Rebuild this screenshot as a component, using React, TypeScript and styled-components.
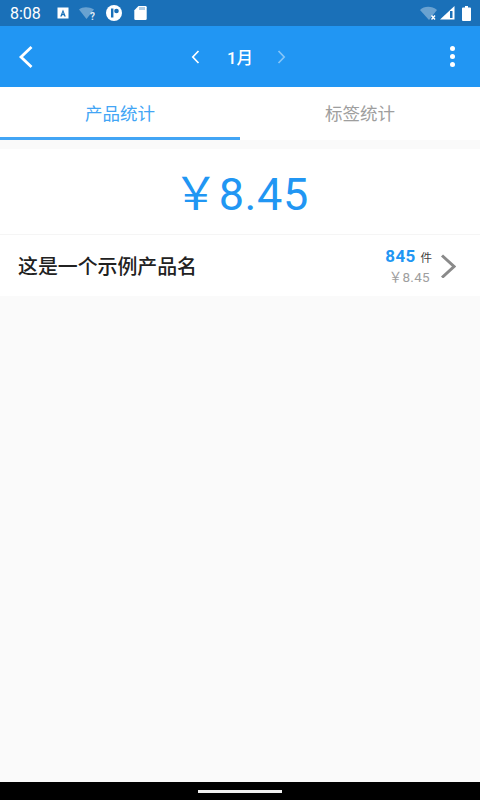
import React from "react";
import styled, { createGlobalStyle } from "styled-components";

const GlobalStyle = createGlobalStyle`
  html, body {
    margin: 0;
    padding: 0;
    height: 100%;
    background: #fafafa;
  }
  #root {
    height: 100%;
  }
`;

const YEN = "\uFFE5";

const App: React.FC = () => {
  return (
    <Page>
      <GlobalStyle />
      <StatusBar>
        <Clock>8:08</Clock>
        <StatusLeft>
          <svg width="12" height="12" viewBox="0 0 12 12">
            <path fillRule="evenodd" fill="#fff" d="M0.500 0.500h11v11h-11z M6 2.500L3.200 9.500h1.500l.5-1.300h1.600l.5 1.300h1.500z M6 5l.5 1.800H5.500z" />
          </svg>
          <svg width="17" height="14" viewBox="0 0 17 14" overflow="visible">
            <path fill="#fff" opacity="0.35" d="M0 3.500C3.500.5 10 .5 15 3.500L7.500 13z" />
            <text x="11" y="14" fontSize="10" fontWeight="700" fontFamily="Roboto, sans-serif" fill="#fff" opacity="0.85">?</text>
          </svg>
          <svg width="16" height="16" viewBox="0 0 16 16">
            <circle cx="8" cy="8" r="8" fill="#fff" />
            <path fill="#1a70b8" d="M5 3.500h2.400v9H5z" />
            <circle cx="10.500" cy="6" r="2.300" fill="#1a70b8" />
          </svg>
          <SdIcon width="13" height="14" viewBox="0 0 13 14">
            <path fill="#fff" d="M4.500 0H11.500A1.200 1.200 0 0 1 12.700 1.200V12.800A1.200 1.200 0 0 1 11.500 14H1.500A1.200 1.200 0 0 1 .3 12.800V4.200z" />
            <path stroke="#1a70b8" strokeWidth="0.700" d="M6 1v3M8 1v3M10 1v3" />
          </SdIcon>
        </StatusLeft>
        <StatusRight>
          <svg width="18" height="15" viewBox="0 0 18 15">
            <path fill="#fff" opacity="0.35" d="M0 4C4-.2 12-.2 17 4L9 14z" />
            <path stroke="#fff" strokeWidth="1.400" d="M11.500 9.500l3.500 4M15 9.500l-3.500 4" />
          </svg>
          <svg width="15" height="14" viewBox="0 0 15 14">
            <path fill="#fff" d="M0 13.500L14.500 0v13.500z" />
            <path fill="#1a70b8" d="M10 5h2.500v7h-2.500z" />
          </svg>
          <BatteryIcon width="9" height="15" viewBox="0 0 9 15">
            <path fill="#fff" d="M3 0h3v1.500h2a1 1 0 0 1 1 1V14a1 1 0 0 1-1 1H1a1 1 0 0 1-1-1V2.500a1 1 0 0 1 1-1h2z" />
          </BatteryIcon>
        </StatusRight>
      </StatusBar>

      <AppBar>
        <BackButton>
          <svg width="16" height="24" viewBox="0 0 16 24">
            <path d="M13.500 2L3 12l10.500 10" fill="none" stroke="#fff" strokeWidth="2.800" />
          </svg>
        </BackButton>
        <MonthPicker>
          <svg width="9" height="14" viewBox="0 0 9 14">
            <path d="M7.500 1L1.800 7l5.700 6" fill="none" stroke="#fff" strokeWidth="1.700" />
          </svg>
          <MonthLabel>1月</MonthLabel>
          <svg width="9" height="14" viewBox="0 0 9 14">
            <path d="M1.500 1l5.700 6-5.700 6" fill="none" stroke="#fff" strokeOpacity="0.45" strokeWidth="1.700" />
          </svg>
        </MonthPicker>
        <MoreButton>
          <Dot />
          <Dot />
          <Dot />
        </MoreButton>
      </AppBar>

      <Tabs>
        <Tab $active>产品统计</Tab>
        <Tab>标签统计</Tab>
      </Tabs>

      <Total>{YEN}8.45</Total>

      <ProductRow>
        <ProductName>这是一个示例产品名</ProductName>
        <Figures>
          <Quantity>
            <QuantityValue>845</QuantityValue>
            <QuantityUnit>件</QuantityUnit>
          </Quantity>
          <RowPrice>{YEN}8.45</RowPrice>
        </Figures>
        <svg width="16" height="24" viewBox="0 0 16 24">
          <path d="M2 1.500L14 12.500 2 23.500" fill="none" stroke="#8a8a8a" strokeWidth="3" />
        </svg>
      </ProductRow>

      <Filler />

      <NavBar>
        <HomeIndicator />
      </NavBar>
    </Page>
  );
};

export default App;

const Page = styled.div`
  width: 480px;
  height: 800px;
  display: flex;
  flex-direction: column;
  overflow: hidden;
  background: #fafafa;
  font-family: Roboto, "Noto Sans CJK SC", sans-serif;
`;

const StatusBar = styled.div`
  height: 26px;
  flex: none;
  display: flex;
  align-items: center;
  padding: 0 9px 0 10px;
  background: #1a70b8;
  color: #fff;
`;

const Clock = styled.div`
  font-size: 16px;
  width: 47px;
`;

const StatusLeft = styled.div`
  display: flex;
  align-items: center;
  gap: 10px;
`;

const SdIcon = styled.svg`
  margin-left: 2px;
`;

const StatusRight = styled.div`
  margin-left: auto;
  display: flex;
  align-items: center;
  gap: 2px;
`;

const BatteryIcon = styled.svg`
  margin-left: 5px;
`;

const AppBar = styled.div`
  height: 61px;
  flex: none;
  display: flex;
  align-items: center;
  position: relative;
  padding: 0 25px 0 18px;
  background: #2196f3;
`;

const BackButton = styled.div`
  display: flex;
  width: 16px;
  margin-right: 157px;
`;

const MonthPicker = styled.div`
  display: flex;
  align-items: center;
  gap: 27px;
`;

const MonthLabel = styled.div`
  font-size: 16.5px;
  font-weight: 500;
  color: #fff;
  margin-right: -3px;
`;

const MoreButton = styled.div`
  display: flex;
  flex-direction: column;
  gap: 3px;
  width: 5px;
  margin-left: auto;
`;

const Dot = styled.div`
  width: 5px;
  height: 5px;
  border-radius: 50%;
  background: #fff;
`;

const Tabs = styled.div`
  height: 53px;
  flex: none;
  display: flex;
  background: #fff;
  margin-bottom: 9px;
`;

const Tab = styled.div<{ $active?: boolean }>`
  flex: 1;
  display: flex;
  align-items: center;
  justify-content: center;
  box-sizing: border-box;
  font-size: 17.5px;
  padding-top: 1px;
  color: ${props => (props.$active ? "#42a5f5" : "#9e9e9e")};
  border-bottom: 3px solid ${props => (props.$active ? "#42a5f5" : "transparent")};
`;

const Total = styled.div`
  height: 86px;
  flex: none;
  display: flex;
  align-items: center;
  justify-content: center;
  box-sizing: border-box;
  padding: 0 0 3px 2px;
  background: #fff;
  border-bottom: 1px solid #f5f5f5;
  font-size: 45px;
  color: #2196f3;
  letter-spacing: 0.6px;
`;

const ProductRow = styled.div`
  height: 61px;
  flex: none;
  display: flex;
  align-items: center;
  padding: 0 24px 0 18px;
  background: #fff;
`;

const ProductName = styled.div`
  flex: 1;
  font-size: 19.9px;
  font-weight: 500;
  color: #212121;
`;

const Figures = styled.div`
  display: flex;
  flex-direction: column;
  align-items: flex-end;
  margin-right: 10px;
`;

const Quantity = styled.div`
  display: flex;
  align-items: baseline;
  gap: 5px;
  margin-right: -2px;
`;

const QuantityValue = styled.span`
  font-size: 17px;
  font-weight: 700;
  color: #2196f3;
  letter-spacing: 0.3px;
`;

const QuantityUnit = styled.span`
  font-size: 11.5px;
  color: #424242;
`;

const RowPrice = styled.div`
  font-size: 13.5px;
  color: #9e9e9e;
  letter-spacing: 0.3px;
`;

const Filler = styled.div`
  flex: 1;
`;

const NavBar = styled.div`
  height: 18px;
  flex: none;
  display: flex;
  align-items: center;
  justify-content: center;
  padding-top: 1px;
  box-sizing: border-box;
  background: #000;
`;

const HomeIndicator = styled.div`
  width: 84px;
  height: 3px;
  background: #f0f0f0;
`;
